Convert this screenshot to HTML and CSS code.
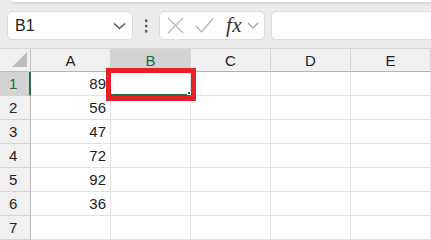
FILE: index.html
```html
<!DOCTYPE html>
<html lang="en">
<head>
  <meta charset="UTF-8" />
  <title>Sheet</title>
  <link rel="stylesheet" href="styles.css">
</head>
<body>
  <div class="ribbon-edge"></div>

  <div class="formula-bar">
    <div class="name-box">
      <span>B1</span>
      <svg width="13" height="8" viewBox="0 0 13 8"><path d="M1 1.5 L6.5 6.5 L12 1.5" fill="none" stroke="#444" stroke-width="1.2"/></svg>
    </div>
    <div class="dots">
      <svg width="4" height="14" viewBox="0 0 4 14"><rect x="1" y="0.5" width="2.4" height="2.4" fill="#555"/><rect x="1" y="5.8" width="2.4" height="2.4" fill="#555"/><rect x="1" y="11.1" width="2.4" height="2.4" fill="#555"/></svg>
    </div>
    <div class="fx-box">
      <svg class="cancel" width="17" height="17" viewBox="0 0 17 17"><path d="M1 1 L16 16 M16 1 L1 16" stroke="#b5b5b5" stroke-width="1.3"/></svg>
      <svg class="enter" width="19" height="17" viewBox="0 0 19 17"><path d="M1 9 L6.5 15 L18 1.5" fill="none" stroke="#b5b5b5" stroke-width="1.3"/></svg>
      <span class="fx">fx</span>
      <svg width="12" height="7" viewBox="0 0 12 7"><path d="M1 1 L6 6 L11 1" fill="none" stroke="#999" stroke-width="1.1"/></svg>
    </div>
    <div class="formula-input"></div>
  </div>

  <div class="sheet">
    <div class="grid">
      <div class="corner"><span class="tri"></span></div>
      <div class="col-head">A</div>
      <div class="col-head active">B</div>
      <div class="col-head">C</div>
      <div class="col-head">D</div>
      <div class="col-head">E</div>

      <div class="row-head active">1</div>
      <div class="cell num">89</div><div class="cell selected"><span class="handle"></span></div><div class="cell"></div><div class="cell"></div><div class="cell"></div>

      <div class="row-head">2</div>
      <div class="cell num">56</div><div class="cell"></div><div class="cell"></div><div class="cell"></div><div class="cell"></div>

      <div class="row-head">3</div>
      <div class="cell num">47</div><div class="cell"></div><div class="cell"></div><div class="cell"></div><div class="cell"></div>

      <div class="row-head">4</div>
      <div class="cell num">72</div><div class="cell"></div><div class="cell"></div><div class="cell"></div><div class="cell"></div>

      <div class="row-head">5</div>
      <div class="cell num">92</div><div class="cell"></div><div class="cell"></div><div class="cell"></div><div class="cell"></div>

      <div class="row-head">6</div>
      <div class="cell num">36</div><div class="cell"></div><div class="cell"></div><div class="cell"></div><div class="cell"></div>

      <div class="row-head">7</div>
      <div class="cell"></div><div class="cell"></div><div class="cell"></div><div class="cell"></div><div class="cell"></div>
    </div>
    <div class="highlight"></div>
  </div>
</body>
</html>
```

FILE: styles.css
```css
* {
  margin: 0;
  padding: 0;
  box-sizing: border-box;
}
body {
  background: #ebebeb;
  font-family: 'Liberation Sans', Arial, sans-serif;
  color: #222;
  overflow: hidden;
  width: 431px;
  height: 240px;
}
.ribbon-edge {
  height: 2px;
  margin-left: 12px;
  background: #fff;
  border-bottom-left-radius: 3px;
  box-shadow: 0 1px 3px rgba(0, 0, 0, 0.18);
}
.formula-bar {
  display: flex;
  align-items: center;
  height: 29px;
  margin-top: 9px;
  padding-left: 7px;
}
.name-box {
  width: 126px;
  height: 29px;
  background: #fff;
  border: 1px solid #dcdcdc;
  border-radius: 5px;
  display: flex;
  align-items: center;
  justify-content: space-between;
  padding: 0 6px 0 7px;
  font-size: 16px;
  color: #222;
}
.dots {
  width: 26px;
  display: flex;
  justify-content: center;
  padding-right: 1px;
}
.fx-box {
  width: 106px;
  height: 29px;
  background: #fff;
  border: 1px solid #dcdcdc;
  border-radius: 5px;
  display: flex;
  align-items: center;
  padding-left: 7px;
}
.fx-box .enter {
  margin-left: 11px;
}
.fx {
  font-family: 'Liberation Serif', 'Times New Roman', serif;
  font-style: italic;
  font-size: 21px;
  color: #333;
  margin-left: 12px;
  margin-right: 5px;
  letter-spacing: 0.5px;
}
.formula-input {
  flex: 1;
  height: 29px;
  margin-left: 6px;
  background: #fff;
  border: 1px solid #dcdcdc;
  border-right: none;
  border-radius: 5px 0 0 5px;
}
.sheet {
  position: relative;
  margin-top: 8px;
}
.grid {
  display: grid;
  grid-template-columns: 31px repeat(5, 80px);
  grid-auto-rows: 24px;
  background: #fff;
  font-size: 15px;
}
.corner {
  background: #f0f0f0;
  border-right: 1px solid #bdbdbd;
  border-bottom: 1px solid #bdbdbd;
  border-top: 1px solid #d8d8d8;
  position: relative;
}
.tri {
  position: absolute;
  right: 3px;
  bottom: 4px;
  width: 0;
  height: 0;
  border-left: 15px solid transparent;
  border-bottom: 15px solid #bcbcbc;
}
.col-head {
  background: #f0f0f0;
  border-top: 1px solid #d8d8d8;
  border-right: 1px solid #d4d4d4;
  border-bottom: 1px solid #b4b4b4;
  display: flex;
  align-items: center;
  justify-content: center;
  color: #222;
}
.col-head.active {
  background: #d3d3d3;
  color: #1e6b47;
}
.row-head {
  background: #f0f0f0;
  border-right: 1px solid #bdbdbd;
  border-bottom: 1px solid #d4d4d4;
  display: flex;
  align-items: center;
  padding-left: 9px;
  color: #222;
}
.row-head.active {
  background: #d3d3d3;
  color: #1e6b47;
  border-right: 2px solid #1e7145;
}
.cell {
  border-right: 1px solid #e1e1e1;
  border-bottom: 1px solid #e1e1e1;
  display: flex;
  align-items: center;
  justify-content: flex-end;
  padding-right: 4px;
}
.cell.selected {
  position: relative;
  border-bottom: 2px solid #1e7145;
}
.handle {
  position: absolute;
  right: -1px;
  bottom: -1px;
  width: 4px;
  height: 4px;
  background: #1e7145;
  border: 1px solid #fff;
}
.highlight {
  position: absolute;
  left: 106px;
  top: 20px;
  width: 90px;
  height: 33px;
  border: 5px solid #e8202a;
}
```
